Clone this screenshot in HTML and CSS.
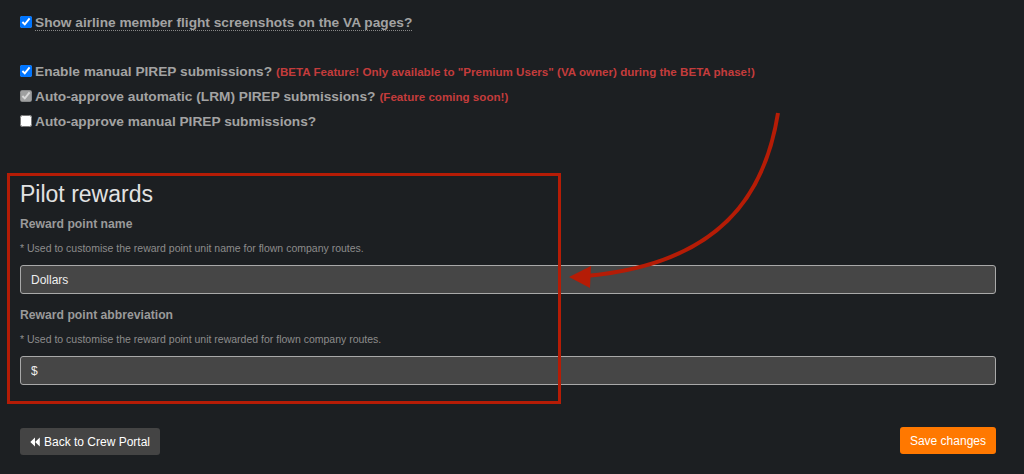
FILE: index.html
```html
<!DOCTYPE html>
<html lang="en">
<head>
    <meta charset="UTF-8">
    <meta name="viewport" content="width=device-width, initial-scale=1.0">
    <title>VA settings</title>
    <link rel="stylesheet" href="styles.css">
</head>
<body>
    <div class="page">
        <div class="check-row first">
            <input type="checkbox" checked>
            <span class="hint-label">Show airline member flight screenshots on the VA pages?</span>
        </div>

        <div class="check-group">
            <div class="check-row">
                <input type="checkbox" checked>
                <span>Enable manual PIREP submissions?</span>
                <span class="warn">(BETA Feature! Only available to "Premium Users" (VA owner) during the BETA phase!)</span>
            </div>
            <div class="check-row">
                <input type="checkbox" checked disabled>
                <span>Auto-approve automatic (LRM) PIREP submissions?</span>
                <span class="warn">(Feature coming soon!)</span>
            </div>
            <div class="check-row">
                <input type="checkbox">
                <span>Auto-approve manual PIREP submissions?</span>
            </div>
        </div>

        <div class="rewards">
            <h2>Pilot rewards</h2>

            <label class="field-label">Reward point name</label>
            <p class="help">* Used to customise the reward point unit name for flown company routes.</p>
            <input class="field" type="text" value="Dollars">

            <label class="field-label second">Reward point abbreviation</label>
            <p class="help">* Used to customise the reward point unit rewarded for flown company routes.</p>
            <input class="field" type="text" value="$">
        </div>

        <div class="actions">
            <button class="btn btn-dark">
                <svg width="10" height="10" viewBox="0 0 10 10"><path d="M5 0.5v9L0.3 5zM9.8 0.5v9L5.1 5z" fill="#fff"/></svg>
                Back to Crew Portal
            </button>
            <button class="btn btn-orange">Save changes</button>
        </div>
    </div>

    <!-- annotation overlay -->
    <div class="highlight-box"></div>
    <svg class="arrow" width="1024" height="474" viewBox="0 0 1024 474">
        <path d="M778 113 C765 195 720 264 586 276" fill="none" stroke="#b51c06" stroke-width="4"/>
        <path d="M569 277 L591 266 L590 288 Z" fill="#b51c06"/>
    </svg>
</body>
</html>
```

FILE: styles.css
```css
body {
    margin: 0;
    background: #1c1f22;
    font-family: "Liberation Sans", Arial, sans-serif;
    color: #a3a3a3;
    height: 474px;
    overflow: hidden;
}
.page {
    padding: 12px 28px 0 20px;
}
.check-row {
    display: flex;
    align-items: center;
    height: 20px;
    font-size: 13.7px;
    font-weight: bold;
    white-space: nowrap;
}
.check-row input {
    width: 12px;
    height: 12px;
    margin: 0 3px 0 0;
}
.check-group {
    margin-top: 29px;
}
.check-group .check-row {
    margin-bottom: 5px;
}
.hint-label {
    border-bottom: 1px dotted #888;
    line-height: 15px;
    margin-top: 2px;
}
.warn {
    color: #c43c3c;
    font-size: 11.6px;
    margin-left: 4px;
}
.rewards h2 {
    margin: 49px 0 0;
    font-size: 23px;
    line-height: 28px;
    font-weight: normal;
    color: #e2e2e2;
}
.field-label {
    display: block;
    margin-top: 8px;
    font-size: 12.2px;
    line-height: 16px;
    font-weight: bold;
    color: #9a9a9a;
}
.field-label.second {
    margin-top: 13px;
}
.help {
    margin: 9px 0 0;
    font-size: 10.5px;
    line-height: 14px;
    color: #8c8c8c;
}
.field {
    display: block;
    box-sizing: border-box;
    width: 100%;
    height: 29px;
    margin-top: 10px;
    padding: 0 10px;
    background: #464646;
    border: 1px solid #a9a9a9;
    border-radius: 3px;
    color: #efefef;
    font-family: inherit;
    font-size: 12px;
}
.actions {
    display: flex;
    justify-content: space-between;
    margin-top: 43px;
}
.btn {
    display: flex;
    align-items: center;
    gap: 4px;
    height: 27px;
    border: none;
    border-radius: 3px;
    color: #fff;
    font-family: inherit;
    font-size: 12px;
    padding: 0 10px;
    white-space: nowrap;
}
.btn-dark {
    background: #444;
}
.btn-orange {
    background: #ff7800;
    margin-top: -1px;
}
.highlight-box {
    position: absolute;
    left: 7px;
    top: 173px;
    width: 548px;
    height: 225px;
    border: 3px solid #b51c06;
}
.arrow {
    position: absolute;
    left: 0;
    top: 0;
    pointer-events: none;
}
```
